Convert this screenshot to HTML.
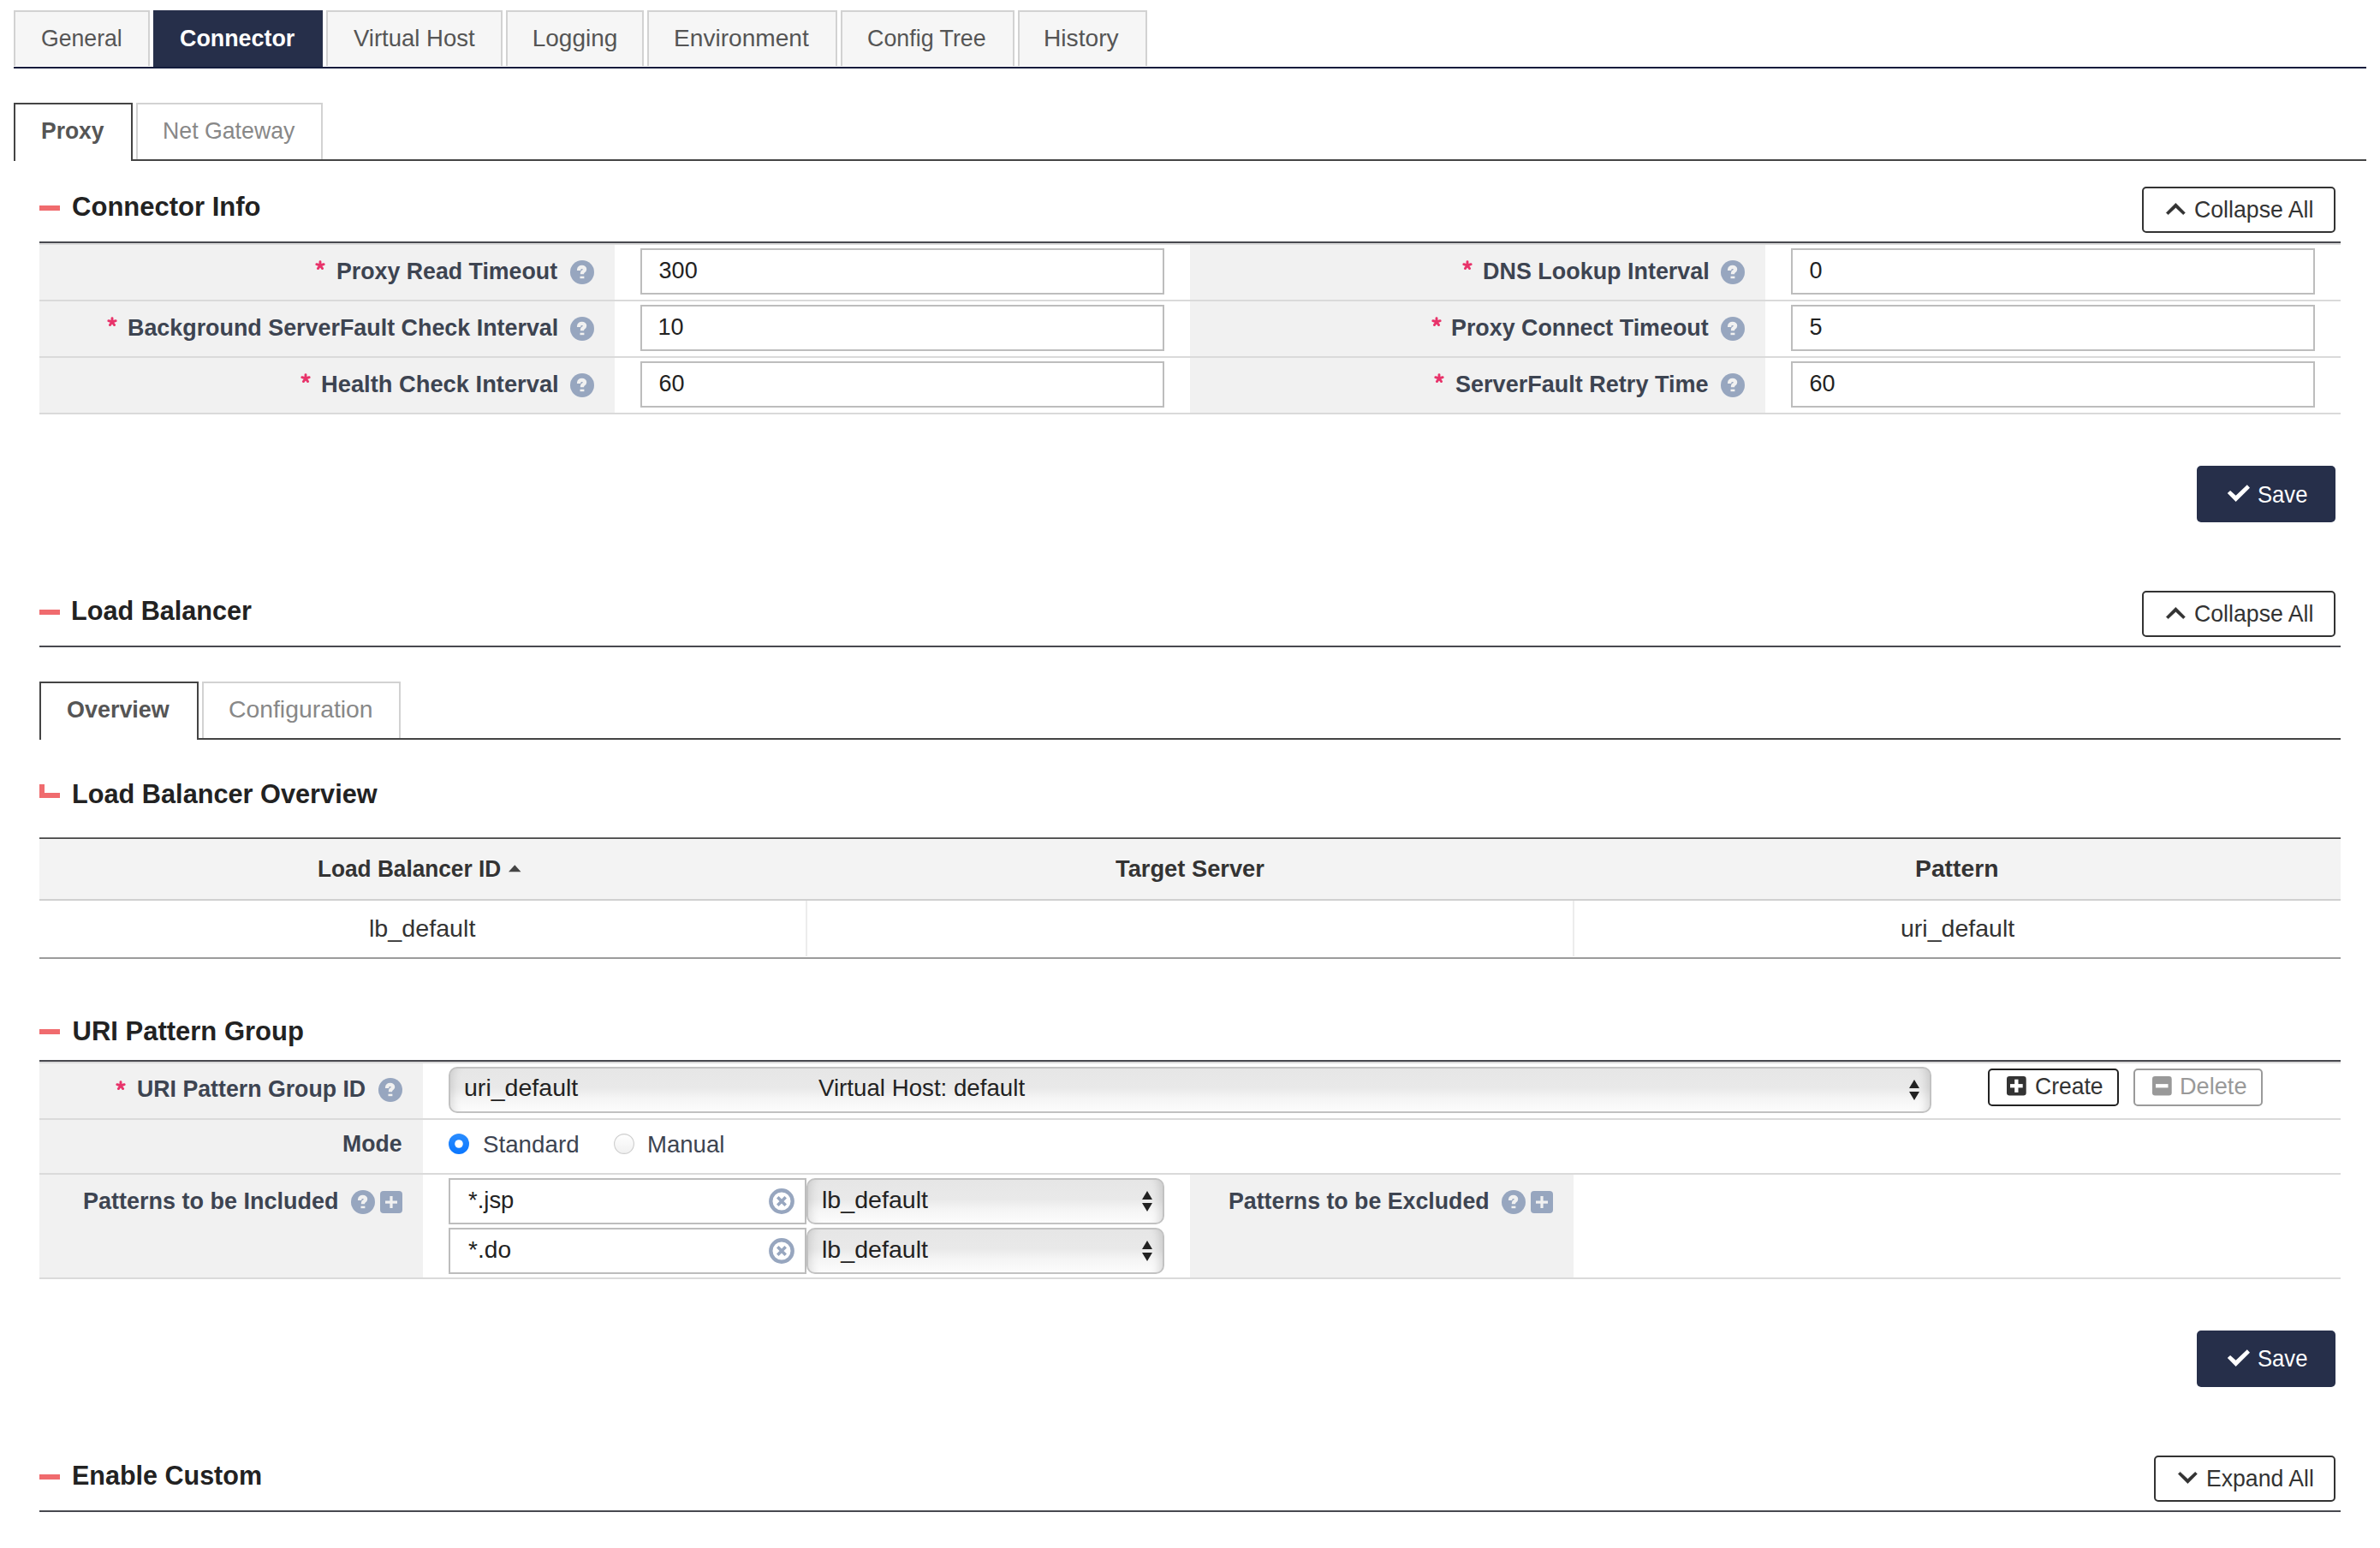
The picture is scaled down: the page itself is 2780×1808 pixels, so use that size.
<!DOCTYPE html>
<html><head><meta charset="utf-8"><title>Connector</title>
<style>
html,body{margin:0;padding:0;background:#fff;}
body{width:2780px;height:1808px;position:relative;overflow:hidden;font-family:"Liberation Sans", sans-serif;}
.b{position:absolute;display:block;}
.t{position:absolute;white-space:nowrap;transform-origin:0 0;font-family:"Liberation Sans", sans-serif;}
@media (max-width:1500px){body{zoom:0.5;}}
</style></head><body>
<div class="b" style="left:16px;top:12px;width:159px;height:65px;background:#f6f6f6;border:2px solid #d2d2d2;border-bottom:0;box-sizing:border-box"></div>
<div class="b" style="left:179px;top:12px;width:198px;height:68px;background:#262f4a"></div>
<div class="b" style="left:381px;top:12px;width:206px;height:65px;background:#f6f6f6;border:2px solid #d2d2d2;border-bottom:0;box-sizing:border-box"></div>
<div class="b" style="left:591px;top:12px;width:161px;height:65px;background:#f6f6f6;border:2px solid #d2d2d2;border-bottom:0;box-sizing:border-box"></div>
<div class="b" style="left:756px;top:12px;width:222px;height:65px;background:#f6f6f6;border:2px solid #d2d2d2;border-bottom:0;box-sizing:border-box"></div>
<div class="b" style="left:982px;top:12px;width:203px;height:65px;background:#f6f6f6;border:2px solid #d2d2d2;border-bottom:0;box-sizing:border-box"></div>
<div class="b" style="left:1189px;top:12px;width:151px;height:65px;background:#f6f6f6;border:2px solid #d2d2d2;border-bottom:0;box-sizing:border-box"></div>
<div class="b" style="left:16px;top:78px;width:2748px;height:2px;background:#131c3c"></div>
<div class="b" style="left:159px;top:120px;width:218px;height:66px;background:#fff;border:2px solid #d2d2d2;border-bottom:0;box-sizing:border-box"></div>
<div class="b" style="left:153px;top:186px;width:2611px;height:2px;background:#444"></div>
<div class="b" style="left:16px;top:120px;width:139px;height:68px;background:#fff;border:2px solid #444;border-bottom:0;box-sizing:border-box"></div>
<div class="b" style="left:46px;top:240px;width:24px;height:6px;background:#f06b6e"></div>
<div class="b" style="left:2502px;top:218px;width:226px;height:54px;border:2px solid #333;border-radius:5px;box-sizing:border-box;background:#fff"></div>
<div class="b" style="left:46px;top:282px;width:2688px;height:2px;background:#48494f"></div>
<div class="b" style="left:46px;top:284px;width:2688px;height:2px;background:#dadada"></div>
<div class="b" style="left:46px;top:286px;width:672px;height:196px;background:#f1f1f1"></div>
<div class="b" style="left:1390px;top:286px;width:672px;height:196px;background:#f1f1f1"></div>
<div class="b" style="left:46px;top:350px;width:2688px;height:2px;background:#dadada"></div>
<div class="b" style="left:46px;top:416px;width:2688px;height:2px;background:#dadada"></div>
<div class="b" style="left:46px;top:482px;width:2688px;height:2px;background:#dadada"></div>
<div class="b" style="left:748px;top:290px;width:612px;height:54px;border:2px solid #bdbdbd;box-sizing:border-box;background:#fff"></div>
<div class="b" style="left:2092px;top:290px;width:612px;height:54px;border:2px solid #bdbdbd;box-sizing:border-box;background:#fff"></div>
<div class="b" style="left:748px;top:356px;width:612px;height:54px;border:2px solid #bdbdbd;box-sizing:border-box;background:#fff"></div>
<div class="b" style="left:2092px;top:356px;width:612px;height:54px;border:2px solid #bdbdbd;box-sizing:border-box;background:#fff"></div>
<div class="b" style="left:748px;top:422px;width:612px;height:54px;border:2px solid #bdbdbd;box-sizing:border-box;background:#fff"></div>
<div class="b" style="left:2092px;top:422px;width:612px;height:54px;border:2px solid #bdbdbd;box-sizing:border-box;background:#fff"></div>
<div class="b" style="left:2566px;top:544px;width:162px;height:66px;background:#262f4a;border-radius:5px"></div>
<div class="b" style="left:46px;top:712px;width:24px;height:6px;background:#f06b6e"></div>
<div class="b" style="left:2502px;top:690px;width:226px;height:54px;border:2px solid #333;border-radius:5px;box-sizing:border-box;background:#fff"></div>
<div class="b" style="left:46px;top:754px;width:2688px;height:2px;background:#48494f"></div>
<div class="b" style="left:236px;top:796px;width:232px;height:66px;background:#fff;border:2px solid #d2d2d2;border-bottom:0;box-sizing:border-box"></div>
<div class="b" style="left:230px;top:862px;width:2504px;height:2px;background:#444"></div>
<div class="b" style="left:46px;top:796px;width:186px;height:68px;background:#fff;border:2px solid #444;border-bottom:0;box-sizing:border-box"></div>
<div class="b" style="left:46px;top:916px;width:6px;height:16px;background:#f06b6e"></div>
<div class="b" style="left:46px;top:926px;width:24px;height:6px;background:#f06b6e"></div>
<div class="b" style="left:46px;top:978px;width:2688px;height:2px;background:#575757"></div>
<div class="b" style="left:46px;top:981px;width:2688px;height:69px;background:#f3f3f3"></div>
<div class="b" style="left:46px;top:1050px;width:2688px;height:2px;background:#d0d0d0"></div>
<div class="b" style="left:941px;top:1052px;width:2px;height:65px;background:#ececec"></div>
<div class="b" style="left:1837px;top:1052px;width:2px;height:65px;background:#ececec"></div>
<div class="b" style="left:46px;top:1118px;width:2688px;height:2px;background:#9c9c9c"></div>
<div class="b" style="left:46px;top:1202px;width:24px;height:6px;background:#f06b6e"></div>
<div class="b" style="left:46px;top:1238px;width:2688px;height:2px;background:#48494f"></div>
<div class="b" style="left:46px;top:1240px;width:2688px;height:2px;background:#dadada"></div>
<div class="b" style="left:46px;top:1242px;width:448px;height:250px;background:#f1f1f1"></div>
<div class="b" style="left:1390px;top:1372px;width:448px;height:120px;background:#f1f1f1"></div>
<div class="b" style="left:46px;top:1306px;width:2688px;height:2px;background:#dadada"></div>
<div class="b" style="left:46px;top:1370px;width:2688px;height:2px;background:#dadada"></div>
<div class="b" style="left:46px;top:1492px;width:2688px;height:2px;background:#dadada"></div>
<div class="b" style="left:524px;top:1246px;width:1732px;height:54px;border:2px solid #c2c2c2;border-radius:10px;box-sizing:border-box;background:linear-gradient(#e6e6e6,#e9e9e9 45%,#f5f5f5 70%,#fcfcfc);box-shadow:inset -14px 0 10px -10px rgba(0,0,0,0.12),inset 14px 0 10px -10px rgba(0,0,0,0.10)"></div>
<div class="b" style="left:2322px;top:1248px;width:153px;height:44px;border:2px solid #222;border-radius:5px;box-sizing:border-box;background:#fff"></div>
<div class="b" style="left:2492px;top:1248px;width:151px;height:44px;border:2px solid #9a9a9a;border-radius:5px;box-sizing:border-box;background:#fff"></div>
<div class="b" style="left:524px;top:1376px;width:418px;height:54px;border:2px solid #bdbdbd;box-sizing:border-box;background:#fff"></div>
<div class="b" style="left:942px;top:1376px;width:418px;height:54px;border:2px solid #c2c2c2;border-radius:10px;box-sizing:border-box;background:linear-gradient(#e6e6e6,#e9e9e9 45%,#f5f5f5 70%,#fcfcfc);box-shadow:inset -14px 0 10px -10px rgba(0,0,0,0.12),inset 14px 0 10px -10px rgba(0,0,0,0.10)"></div>
<div class="b" style="left:524px;top:1434px;width:418px;height:54px;border:2px solid #bdbdbd;box-sizing:border-box;background:#fff"></div>
<div class="b" style="left:942px;top:1434px;width:418px;height:54px;border:2px solid #c2c2c2;border-radius:10px;box-sizing:border-box;background:linear-gradient(#e6e6e6,#e9e9e9 45%,#f5f5f5 70%,#fcfcfc);box-shadow:inset -14px 0 10px -10px rgba(0,0,0,0.12),inset 14px 0 10px -10px rgba(0,0,0,0.10)"></div>
<div class="b" style="left:2566px;top:1554px;width:162px;height:66px;background:#262f4a;border-radius:5px"></div>
<div class="b" style="left:46px;top:1722px;width:24px;height:6px;background:#f06b6e"></div>
<div class="b" style="left:2516px;top:1700px;width:212px;height:54px;border:2px solid #333;border-radius:5px;box-sizing:border-box;background:#fff"></div>
<div class="b" style="left:46px;top:1764px;width:2688px;height:2px;background:#48494f"></div>
<svg class="b" style="left:666px;top:304px" width="28" height="28" viewBox="0 0 28 28"><circle cx="14" cy="14" r="14" fill="#97a6bf"/><path d="M10.1 12 L10.1 11.2 C10.1 9 11.8 7.9 13.8 7.9 C15.8 7.9 17.1 9.0 17.1 10.4 C17.1 12 15.9 12.7 15 13.3 C14.3 13.8 14.0 14.3 14.0 15.2 L14.0 16.2" fill="none" stroke="#f1f1f1" stroke-width="4.3"/><rect x="11.5" y="18.7" width="4.9" height="2.5" fill="#f1f1f1"/></svg>
<svg class="b" style="left:2010px;top:304px" width="28" height="28" viewBox="0 0 28 28"><circle cx="14" cy="14" r="14" fill="#97a6bf"/><path d="M10.1 12 L10.1 11.2 C10.1 9 11.8 7.9 13.8 7.9 C15.8 7.9 17.1 9.0 17.1 10.4 C17.1 12 15.9 12.7 15 13.3 C14.3 13.8 14.0 14.3 14.0 15.2 L14.0 16.2" fill="none" stroke="#f1f1f1" stroke-width="4.3"/><rect x="11.5" y="18.7" width="4.9" height="2.5" fill="#f1f1f1"/></svg>
<svg class="b" style="left:666px;top:370px" width="28" height="28" viewBox="0 0 28 28"><circle cx="14" cy="14" r="14" fill="#97a6bf"/><path d="M10.1 12 L10.1 11.2 C10.1 9 11.8 7.9 13.8 7.9 C15.8 7.9 17.1 9.0 17.1 10.4 C17.1 12 15.9 12.7 15 13.3 C14.3 13.8 14.0 14.3 14.0 15.2 L14.0 16.2" fill="none" stroke="#f1f1f1" stroke-width="4.3"/><rect x="11.5" y="18.7" width="4.9" height="2.5" fill="#f1f1f1"/></svg>
<svg class="b" style="left:2010px;top:370px" width="28" height="28" viewBox="0 0 28 28"><circle cx="14" cy="14" r="14" fill="#97a6bf"/><path d="M10.1 12 L10.1 11.2 C10.1 9 11.8 7.9 13.8 7.9 C15.8 7.9 17.1 9.0 17.1 10.4 C17.1 12 15.9 12.7 15 13.3 C14.3 13.8 14.0 14.3 14.0 15.2 L14.0 16.2" fill="none" stroke="#f1f1f1" stroke-width="4.3"/><rect x="11.5" y="18.7" width="4.9" height="2.5" fill="#f1f1f1"/></svg>
<svg class="b" style="left:666px;top:436px" width="28" height="28" viewBox="0 0 28 28"><circle cx="14" cy="14" r="14" fill="#97a6bf"/><path d="M10.1 12 L10.1 11.2 C10.1 9 11.8 7.9 13.8 7.9 C15.8 7.9 17.1 9.0 17.1 10.4 C17.1 12 15.9 12.7 15 13.3 C14.3 13.8 14.0 14.3 14.0 15.2 L14.0 16.2" fill="none" stroke="#f1f1f1" stroke-width="4.3"/><rect x="11.5" y="18.7" width="4.9" height="2.5" fill="#f1f1f1"/></svg>
<svg class="b" style="left:2010px;top:436px" width="28" height="28" viewBox="0 0 28 28"><circle cx="14" cy="14" r="14" fill="#97a6bf"/><path d="M10.1 12 L10.1 11.2 C10.1 9 11.8 7.9 13.8 7.9 C15.8 7.9 17.1 9.0 17.1 10.4 C17.1 12 15.9 12.7 15 13.3 C14.3 13.8 14.0 14.3 14.0 15.2 L14.0 16.2" fill="none" stroke="#f1f1f1" stroke-width="4.3"/><rect x="11.5" y="18.7" width="4.9" height="2.5" fill="#f1f1f1"/></svg>
<svg class="b" style="left:442px;top:1259px" width="28" height="28" viewBox="0 0 28 28"><circle cx="14" cy="14" r="14" fill="#97a6bf"/><path d="M10.1 12 L10.1 11.2 C10.1 9 11.8 7.9 13.8 7.9 C15.8 7.9 17.1 9.0 17.1 10.4 C17.1 12 15.9 12.7 15 13.3 C14.3 13.8 14.0 14.3 14.0 15.2 L14.0 16.2" fill="none" stroke="#f1f1f1" stroke-width="4.3"/><rect x="11.5" y="18.7" width="4.9" height="2.5" fill="#f1f1f1"/></svg>
<svg class="b" style="left:410px;top:1390px" width="28" height="28" viewBox="0 0 28 28"><circle cx="14" cy="14" r="14" fill="#97a6bf"/><path d="M10.1 12 L10.1 11.2 C10.1 9 11.8 7.9 13.8 7.9 C15.8 7.9 17.1 9.0 17.1 10.4 C17.1 12 15.9 12.7 15 13.3 C14.3 13.8 14.0 14.3 14.0 15.2 L14.0 16.2" fill="none" stroke="#f1f1f1" stroke-width="4.3"/><rect x="11.5" y="18.7" width="4.9" height="2.5" fill="#f1f1f1"/></svg>
<svg class="b" style="left:444px;top:1391px" width="26" height="26" viewBox="0 0 26 26"><rect x="0" y="0" width="26" height="26" rx="4" fill="#97a6bf"/><rect x="6" y="11.5" width="14" height="3.2" fill="#f1f1f1"/><rect x="11.4" y="6" width="3.2" height="14" fill="#f1f1f1"/></svg>
<svg class="b" style="left:1754px;top:1390px" width="28" height="28" viewBox="0 0 28 28"><circle cx="14" cy="14" r="14" fill="#97a6bf"/><path d="M10.1 12 L10.1 11.2 C10.1 9 11.8 7.9 13.8 7.9 C15.8 7.9 17.1 9.0 17.1 10.4 C17.1 12 15.9 12.7 15 13.3 C14.3 13.8 14.0 14.3 14.0 15.2 L14.0 16.2" fill="none" stroke="#f1f1f1" stroke-width="4.3"/><rect x="11.5" y="18.7" width="4.9" height="2.5" fill="#f1f1f1"/></svg>
<svg class="b" style="left:1788px;top:1391px" width="26" height="26" viewBox="0 0 26 26"><rect x="0" y="0" width="26" height="26" rx="4" fill="#97a6bf"/><rect x="6" y="11.5" width="14" height="3.2" fill="#f1f1f1"/><rect x="11.4" y="6" width="3.2" height="14" fill="#f1f1f1"/></svg>
<svg class="b" style="left:2529px;top:236px" width="25" height="16" viewBox="0 0 25 16"><polygon points="1.2,12.5 3.6,14.7 12.4,6.5 21.2,14.7 23.5,12.4 12.4,1.2" fill="#333" stroke="#333" stroke-width="0.4" stroke-linejoin="round"/></svg>
<svg class="b" style="left:2529px;top:708px" width="25" height="16" viewBox="0 0 25 16"><polygon points="1.2,12.5 3.6,14.7 12.4,6.5 21.2,14.7 23.5,12.4 12.4,1.2" fill="#333" stroke="#333" stroke-width="0.4" stroke-linejoin="round"/></svg>
<svg class="b" style="left:2542.8px;top:1718.2px" width="25" height="16" viewBox="0 0 25 16"><polygon points="1.2,3.4 3.6,1.2 12.4,9.4 21.2,1.2 23.5,3.5 12.4,14.7" fill="#333" stroke="#333" stroke-width="0.4" stroke-linejoin="round"/></svg>
<svg class="b" style="left:2600px;top:564px" width="30" height="24" viewBox="0 0 30 24"><polygon points="1.8,12.1 5.1,9.0 11.6,14.8 24.8,2.2 28,5.7 11.6,21.9" fill="#fff"/></svg>
<svg class="b" style="left:2600px;top:1573.5px" width="30" height="24" viewBox="0 0 30 24"><polygon points="1.8,12.1 5.1,9.0 11.6,14.8 24.8,2.2 28,5.7 11.6,21.9" fill="#fff"/></svg>
<svg class="b" style="left:594px;top:1009.5px" width="15" height="9" viewBox="0 0 15 9"><polygon points="0,8.3 7.3,0.3 14.5,8.3" fill="#444"/></svg>
<svg class="b" style="left:2230px;top:1261px" width="12" height="24" viewBox="0 0 12 24"><polygon points="0,10 6,0 12,10" fill="#222"/><polygon points="0,14 12,14 6,24" fill="#222"/></svg>
<svg class="b" style="left:1334px;top:1391px" width="12" height="24" viewBox="0 0 12 24"><polygon points="0,10 6,0 12,10" fill="#222"/><polygon points="0,14 12,14 6,24" fill="#222"/></svg>
<svg class="b" style="left:1334px;top:1449px" width="12" height="24" viewBox="0 0 12 24"><polygon points="0,10 6,0 12,10" fill="#222"/><polygon points="0,14 12,14 6,24" fill="#222"/></svg>
<svg class="b" style="left:898px;top:1388px" width="30" height="30" viewBox="0 0 30 30"><circle cx="15" cy="15" r="12.7" fill="none" stroke="#97a6bf" stroke-width="4.4"/><path d="M10.3 10.3 L19.7 19.7 M19.7 10.3 L10.3 19.7" stroke="#97a6bf" stroke-width="3.6"/></svg>
<svg class="b" style="left:898px;top:1446px" width="30" height="30" viewBox="0 0 30 30"><circle cx="15" cy="15" r="12.7" fill="none" stroke="#97a6bf" stroke-width="4.4"/><path d="M10.3 10.3 L19.7 19.7 M19.7 10.3 L10.3 19.7" stroke="#97a6bf" stroke-width="3.6"/></svg>
<svg class="b" style="left:2344px;top:1257px" width="23" height="23" viewBox="0 0 23 23"><rect width="22.7" height="22.5" rx="3.2" fill="#333"/><rect x="4" y="9.1" width="14.7" height="4.3" fill="#fff"/><rect x="9.2" y="3.7" width="4.3" height="15.2" fill="#fff"/></svg>
<svg class="b" style="left:2514px;top:1257px" width="23" height="23" viewBox="0 0 23 23"><rect width="22.7" height="22.5" rx="3.2" fill="#999"/><rect x="4" y="9.1" width="14.5" height="4.3" fill="#fff"/></svg>
<svg class="b" style="left:524px;top:1324px" width="24" height="24" viewBox="0 0 24 24"><defs><linearGradient id="rg" x1="0" y1="0" x2="0" y2="1"><stop offset="0" stop-color="#2b8dff"/><stop offset="1" stop-color="#0a76ff"/></linearGradient></defs><circle cx="12" cy="12" r="12" fill="url(#rg)"/><circle cx="12" cy="12" r="4.8" fill="#fff"/></svg>
<svg class="b" style="left:717px;top:1324px" width="24" height="24" viewBox="0 0 24 24"><defs><linearGradient id="rg2" x1="0" y1="0" x2="0" y2="1"><stop offset="0" stop-color="#ffffff"/><stop offset="1" stop-color="#f0f0f0"/></linearGradient></defs><circle cx="12" cy="12" r="11.4" fill="url(#rg2)" stroke="#cdcdcd" stroke-width="1.1"/></svg>
<svg class="b" style="left:362.1px;top:298.1px" width="24" height="24" viewBox="0 0 24 24"><path d="M12 12 L12.00 7.60 M12 12 L16.18 10.64 M12 12 L14.59 15.56 M12 12 L9.41 15.56 M12 12 L7.82 10.64 " stroke="#e8336a" stroke-width="2.9" stroke-linecap="round" fill="none"/></svg>
<svg class="b" style="left:118.6px;top:364.1px" width="24" height="24" viewBox="0 0 24 24"><path d="M12 12 L12.00 7.60 M12 12 L16.18 10.64 M12 12 L14.59 15.56 M12 12 L9.41 15.56 M12 12 L7.82 10.64 " stroke="#e8336a" stroke-width="2.9" stroke-linecap="round" fill="none"/></svg>
<svg class="b" style="left:344.5px;top:430.1px" width="24" height="24" viewBox="0 0 24 24"><path d="M12 12 L12.00 7.60 M12 12 L16.18 10.64 M12 12 L14.59 15.56 M12 12 L9.41 15.56 M12 12 L7.82 10.64 " stroke="#e8336a" stroke-width="2.9" stroke-linecap="round" fill="none"/></svg>
<svg class="b" style="left:1701.75px;top:298.1px" width="24" height="24" viewBox="0 0 24 24"><path d="M12 12 L12.00 7.60 M12 12 L16.18 10.64 M12 12 L14.59 15.56 M12 12 L9.41 15.56 M12 12 L7.82 10.64 " stroke="#e8336a" stroke-width="2.9" stroke-linecap="round" fill="none"/></svg>
<svg class="b" style="left:1665.75px;top:364.1px" width="24" height="24" viewBox="0 0 24 24"><path d="M12 12 L12.00 7.60 M12 12 L16.18 10.64 M12 12 L14.59 15.56 M12 12 L9.41 15.56 M12 12 L7.82 10.64 " stroke="#e8336a" stroke-width="2.9" stroke-linecap="round" fill="none"/></svg>
<svg class="b" style="left:1668.75px;top:430.1px" width="24" height="24" viewBox="0 0 24 24"><path d="M12 12 L12.00 7.60 M12 12 L16.18 10.64 M12 12 L14.59 15.56 M12 12 L9.41 15.56 M12 12 L7.82 10.64 " stroke="#e8336a" stroke-width="2.9" stroke-linecap="round" fill="none"/></svg>
<svg class="b" style="left:129.35px;top:1255.8px" width="24" height="24" viewBox="0 0 24 24"><path d="M12 12 L12.00 7.60 M12 12 L16.18 10.64 M12 12 L14.59 15.56 M12 12 L9.41 15.56 M12 12 L7.82 10.64 " stroke="#e8336a" stroke-width="2.9" stroke-linecap="round" fill="none"/></svg>
<span class="t" style="left:48.0px;top:31.2px;font-size:28px;line-height:28px;font-weight:400;color:#555;transform:scaleX(0.9508);">General</span>
<span class="t" style="left:210.0px;top:31.2px;font-size:28px;line-height:28px;font-weight:700;color:#fff;transform:scaleX(0.9590);">Connector</span>
<span class="t" style="left:412.5px;top:31.2px;font-size:28px;line-height:28px;font-weight:400;color:#555;transform:scaleX(0.9825);">Virtual Host</span>
<span class="t" style="left:621.7px;top:31.2px;font-size:28px;line-height:28px;font-weight:400;color:#555;">Logging</span>
<span class="t" style="left:787.0px;top:31.2px;font-size:28px;line-height:28px;font-weight:400;color:#555;transform:scaleX(1.0038);">Environment</span>
<span class="t" style="left:1013.3px;top:31.2px;font-size:28px;line-height:28px;font-weight:400;color:#555;transform:scaleX(0.9584);">Config Tree</span>
<span class="t" style="left:1219.4px;top:31.2px;font-size:28px;line-height:28px;font-weight:400;color:#555;transform:scaleX(1.0057);">History</span>
<span class="t" style="left:48.1px;top:139.2px;font-size:28px;line-height:28px;font-weight:700;color:#555;transform:scaleX(0.9450);">Proxy</span>
<span class="t" style="left:190.1px;top:139.2px;font-size:28px;line-height:28px;font-weight:400;color:#888;transform:scaleX(0.9540);">Net Gateway</span>
<span class="t" style="left:78.0px;top:815.0px;font-size:28px;line-height:28px;font-weight:700;color:#555;transform:scaleX(0.9617);">Overview</span>
<span class="t" style="left:267.4px;top:815.0px;font-size:28px;line-height:28px;font-weight:400;color:#888;transform:scaleX(1.0123);">Configuration</span>
<span class="t" style="left:84.1px;top:226.0px;font-size:31px;line-height:31px;font-weight:700;color:#222;">Connector Info</span>
<span class="t" style="left:83.3px;top:698.2px;font-size:31px;line-height:31px;font-weight:700;color:#222;transform:scaleX(0.9879);">Load Balancer</span>
<span class="t" style="left:83.5px;top:912.0px;font-size:31px;line-height:31px;font-weight:700;color:#222;transform:scaleX(0.9903);">Load Balancer Overview</span>
<span class="t" style="left:84.5px;top:1188.6px;font-size:31px;line-height:31px;font-weight:700;color:#222;">URI Pattern Group</span>
<span class="t" style="left:84.0px;top:1708.0px;font-size:31px;line-height:31px;font-weight:700;color:#222;transform:scaleX(0.9839);">Enable Custom</span>
<span class="t" style="left:392.8px;top:302.9px;font-size:28px;line-height:28px;font-weight:700;color:#3d4451;transform:scaleX(0.9550);">Proxy Read Timeout</span>
<span class="t" style="left:149.0px;top:368.6px;font-size:28px;line-height:28px;font-weight:700;color:#3d4451;transform:scaleX(0.9597);">Background ServerFault Check Interval</span>
<span class="t" style="left:374.6px;top:434.6px;font-size:28px;line-height:28px;font-weight:700;color:#3d4451;transform:scaleX(0.9752);">Health Check Interval</span>
<span class="t" style="left:1731.9px;top:302.9px;font-size:28px;line-height:28px;font-weight:700;color:#3d4451;transform:scaleX(0.9615);">DNS Lookup Interval</span>
<span class="t" style="left:1694.7px;top:368.6px;font-size:28px;line-height:28px;font-weight:700;color:#3d4451;transform:scaleX(0.9580);">Proxy Connect Timeout</span>
<span class="t" style="left:1700.0px;top:434.6px;font-size:28px;line-height:28px;font-weight:700;color:#3d4451;transform:scaleX(0.9657);">ServerFault Retry Time</span>
<span class="t" style="left:160.0px;top:1258.0px;font-size:28px;line-height:28px;font-weight:700;color:#3d4451;transform:scaleX(0.9541);">URI Pattern Group ID</span>
<span class="t" style="left:399.6px;top:1322.2px;font-size:28px;line-height:28px;font-weight:700;color:#3d4451;transform:scaleX(0.9506);">Mode</span>
<span class="t" style="left:96.6px;top:1389.0px;font-size:28px;line-height:28px;font-weight:700;color:#3d4451;transform:scaleX(0.9639);">Patterns to be Included</span>
<span class="t" style="left:1435.0px;top:1388.5px;font-size:28px;line-height:28px;font-weight:700;color:#3d4451;transform:scaleX(0.9550);">Patterns to be Excluded</span>
<span class="t" style="left:769.6px;top:303.0px;font-size:27px;line-height:27px;font-weight:400;color:#222;">300</span>
<span class="t" style="left:768.6px;top:369.0px;font-size:27px;line-height:27px;font-weight:400;color:#222;">10</span>
<span class="t" style="left:769.6px;top:435.0px;font-size:27px;line-height:27px;font-weight:400;color:#222;">60</span>
<span class="t" style="left:2113.6px;top:303.0px;font-size:27px;line-height:27px;font-weight:400;color:#222;">0</span>
<span class="t" style="left:2113.6px;top:369.0px;font-size:27px;line-height:27px;font-weight:400;color:#222;">5</span>
<span class="t" style="left:2113.6px;top:435.0px;font-size:27px;line-height:27px;font-weight:400;color:#222;">60</span>
<span class="t" style="left:370.7px;top:1000.6px;font-size:28px;line-height:28px;font-weight:700;color:#333;transform:scaleX(0.9362);">Load Balancer ID</span>
<span class="t" style="left:1302.5px;top:1001.0px;font-size:28px;line-height:28px;font-weight:700;color:#333;transform:scaleX(0.9744);">Target Server</span>
<span class="t" style="left:2237.0px;top:1001.0px;font-size:28px;line-height:28px;font-weight:700;color:#333;transform:scaleX(1.0110);">Pattern</span>
<span class="t" style="left:431.0px;top:1070.7px;font-size:28px;line-height:28px;font-weight:400;color:#333;transform:scaleX(1.0244);">lb_default</span>
<span class="t" style="left:2219.6px;top:1071.0px;font-size:28px;line-height:28px;font-weight:400;color:#333;transform:scaleX(1.0186);">uri_default</span>
<span class="t" style="left:542.0px;top:1257.4px;font-size:28px;line-height:28px;font-weight:400;color:#222;transform:scaleX(1.0194);">uri_default</span>
<span class="t" style="left:955.5px;top:1257.4px;font-size:28px;line-height:28px;font-weight:400;color:#222;transform:scaleX(0.9887);">Virtual Host: default</span>
<span class="t" style="left:564.0px;top:1323.0px;font-size:28px;line-height:28px;font-weight:400;color:#3d4451;transform:scaleX(0.9904);">Standard</span>
<span class="t" style="left:755.8px;top:1323.0px;font-size:28px;line-height:28px;font-weight:400;color:#3d4451;transform:scaleX(0.9841);">Manual</span>
<span class="t" style="left:547.0px;top:1387.5px;font-size:28px;line-height:28px;font-weight:400;color:#222;transform:scaleX(0.9797);">*.jsp</span>
<span class="t" style="left:547.0px;top:1445.7px;font-size:28px;line-height:28px;font-weight:400;color:#222;transform:scaleX(1.0051);">*.do</span>
<span class="t" style="left:960.0px;top:1387.5px;font-size:28px;line-height:28px;font-weight:400;color:#222;transform:scaleX(1.0211);">lb_default</span>
<span class="t" style="left:960.0px;top:1445.7px;font-size:28px;line-height:28px;font-weight:400;color:#222;transform:scaleX(1.0211);">lb_default</span>
<span class="t" style="left:2563.0px;top:231.0px;font-size:28px;line-height:28px;font-weight:400;color:#333;transform:scaleX(0.9531);">Collapse All</span>
<span class="t" style="left:2563.0px;top:702.8px;font-size:28px;line-height:28px;font-weight:400;color:#333;transform:scaleX(0.9531);">Collapse All</span>
<span class="t" style="left:2637.1px;top:563.5px;font-size:28px;line-height:28px;font-weight:400;color:#fff;transform:scaleX(0.9157);">Save</span>
<span class="t" style="left:2637.1px;top:1573.0px;font-size:28px;line-height:28px;font-weight:400;color:#fff;transform:scaleX(0.9157);">Save</span>
<span class="t" style="left:2376.7px;top:1255.2px;font-size:28px;line-height:28px;font-weight:400;color:#333;transform:scaleX(0.9470);">Create</span>
<span class="t" style="left:2545.9px;top:1255.2px;font-size:28px;line-height:28px;font-weight:400;color:#999;transform:scaleX(0.9698);">Delete</span>
<span class="t" style="left:2576.5px;top:1712.6px;font-size:28px;line-height:28px;font-weight:400;color:#333;transform:scaleX(0.9507);">Expand All</span>
</body></html>
